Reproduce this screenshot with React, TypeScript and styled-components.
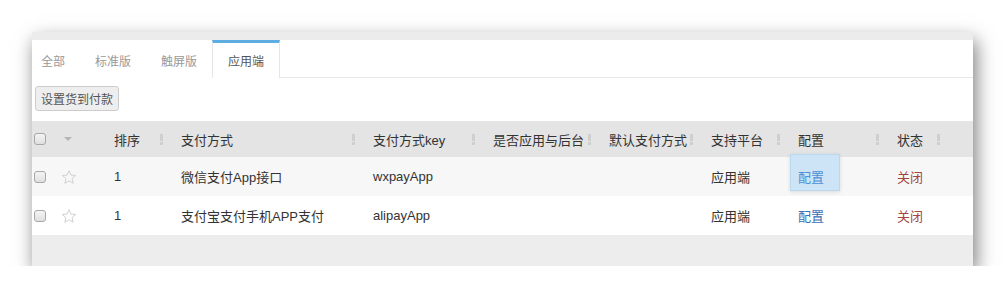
import React from "react";
import styled, { createGlobalStyle } from "styled-components";

const Global = createGlobalStyle`
  html, body { margin: 0; padding: 0; background: #fff; }
  body {
    font-family: "Liberation Sans", "Noto Sans CJK SC", sans-serif;
    font-size: 13px;
    color: #333;
  }
`;

const Page = styled.div`
  padding: 32px 32px 0 32px;
`;

const Panel = styled.div`
  width: 941px;
  background: #fff;
  border-top: 8px solid #ececec;
  box-shadow: 3px 8px 18px rgba(0, 0, 0, 0.52);
`;

const Tabs = styled.div`
  display: flex;
  height: 37px;
  border-bottom: 1px solid #e8e8e8;
`;

const Tab = styled.div<{ $active?: boolean }>`
  display: flex;
  align-items: center;
  padding: 0 15px;
  font-size: 12px;
  color: ${(p) => (p.$active ? "#555" : "#999")};
  background: #fff;
  border-left: ${(p) => (p.$active ? "1px solid #e6e6e6" : "none")};
  border-right: ${(p) => (p.$active ? "1px solid #e6e6e6" : "none")};
  border-top: 3px solid ${(p) => (p.$active ? "#5dade2" : "transparent")};
  margin-bottom: -1px;
  height: 35px;
  &:first-child { padding-left: 9px; }
`;

const Toolbar = styled.div`
  display: flex;
  padding: 8px 3px 10px;
`;

const Button = styled.button`
  height: 25px;
  padding: 0 5px;
  font-family: inherit;
  font-size: 12px;
  color: #555;
  background: #eee;
  border: 1px solid #ccc;
  border-radius: 3px;
`;

const cols = "20px 48px 67px 192px 120px 116px 102px 87px 99px 61px 29px";

const Row = styled.div<{ $kind: "head" | "odd" | "even" }>`
  display: grid;
  grid-template-columns: ${cols};
  align-items: center;
  height: ${(p) => (p.$kind === "head" ? 36 : 39)}px;
  background: ${(p) =>
    p.$kind === "head" ? "#e4e4e4" : p.$kind === "odd" ? "#f7f7f7" : "#fff"};
  color: #333;
`;

const Cell = styled.div<{ $sep?: boolean }>`
  position: relative;
  padding-left: 14px;
  height: 100%;
  display: flex;
  align-items: center;
  white-space: nowrap;
  &::after {
    content: "";
    display: ${(p) => (p.$sep ? "block" : "none")};
    position: absolute;
    right: 4px;
    top: 13px;
    width: 3px;
    height: 11px;
    background: linear-gradient(#cfcfcf 0 7px, transparent 7px 8px, #cfcfcf 8px);
  }
`;

const BoxCell = styled.div`
  padding-left: 2px;
  display: flex;
  align-items: center;
`;

const IconCell = styled.div`
  padding-left: 9px;
  display: flex;
  align-items: center;
`;

const Check = styled.span`
  display: inline-block;
  width: 10px;
  height: 10px;
  border: 1px solid #a8a8a8;
  border-radius: 3px;
  background: linear-gradient(#f4f4f4, #e0e0e0);
`;

const Arrow = styled.span`
  display: inline-block;
  margin-left: 3px;
  width: 0;
  height: 0;
  border-left: 4px solid transparent;
  border-right: 4px solid transparent;
  border-top: 4px solid #b5b5b5;
`;

const Link = styled.span<{ $color: string }>`
  color: ${(p) => p.$color};
`;

const Focus = styled.span`
  position: absolute;
  left: 6px;
  top: -3px;
  width: 48px;
  height: 35px;
  background: #cde4f7;
  border: 1px solid #b9d9f1;
  box-shadow: 0 1px 4px rgba(0, 0, 0, 0.12);
  z-index: 0;
`;

const FocusText = styled.span`
  position: relative;
  z-index: 1;
  color: #4d8fd5;
`;

const Footer = styled.div`
  height: 31px;
  background: #ededed;
`;

const Star = () => (
  <svg width="16" height="16" viewBox="0 0 24 24">
    <path
      d="M12 2.5l2.9 6.6 7.1.6-5.4 4.7 1.6 7-6.2-3.7-6.2 3.7 1.6-7L2 9.7l7.1-.6z"
      fill="none"
      stroke="#cdcdcd"
      strokeWidth="1.4"
      strokeLinejoin="round"
    />
  </svg>
);

const headers = ["排序", "支付方式", "支付方式key", "是否应用与后台", "默认支付方式", "支持平台", "配置", "状态"];

const data = [
  { n: "1", name: "微信支付App接口", key: "wxpayApp", plat: "应用端", focus: true },
  { n: "1", name: "支付宝支付手机APP支付", key: "alipayApp", plat: "应用端", focus: false },
];

export default function App() {
  return (
    <>
      <Global />
      <Page>
        <Panel>
          <Tabs>
            <Tab>全部</Tab>
            <Tab>标准版</Tab>
            <Tab>触屏版</Tab>
            <Tab $active>应用端</Tab>
          </Tabs>
          <Toolbar>
            <Button>设置货到付款</Button>
          </Toolbar>
          <Row $kind="head">
            <BoxCell><Check /></BoxCell>
            <IconCell><Arrow /></IconCell>
            {headers.map((h) => (
              <Cell key={h} $sep>{h}</Cell>
            ))}
            <div />
          </Row>
          {data.map((d, i) => (
            <Row key={d.key} $kind={i % 2 === 0 ? "odd" : "even"}>
              <BoxCell><Check /></BoxCell>
              <IconCell><Star /></IconCell>
              <Cell>{d.n}</Cell>
              <Cell>{d.name}</Cell>
              <Cell>{d.key}</Cell>
              <Cell />
              <Cell />
              <Cell>{d.plat}</Cell>
              <Cell>
                {d.focus ? (
                  <>
                    <Focus />
                    <FocusText>配置</FocusText>
                  </>
                ) : (
                  <Link $color="#3a6db3">配置</Link>
                )}
              </Cell>
              <Cell>
                <Link $color="#a4443c">关闭</Link>
              </Cell>
              <div />
            </Row>
          ))}
          <Footer />
        </Panel>
      </Page>
    </>
  );
}
